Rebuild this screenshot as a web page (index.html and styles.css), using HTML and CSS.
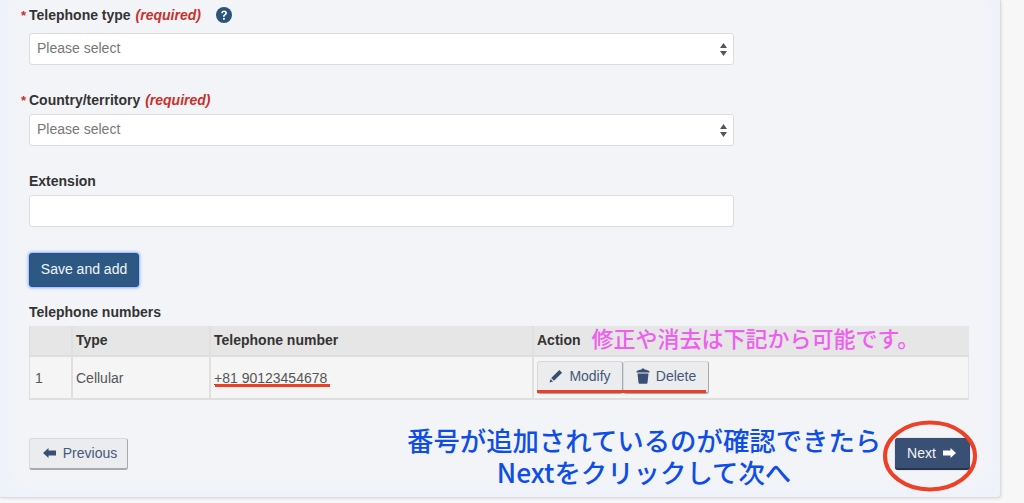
FILE: index.html
```html
<!DOCTYPE html>
<html lang="en">
<head>
<meta charset="utf-8">
<title>Telephone numbers</title>
<link rel="stylesheet" href="styles.css">
</head>
<body>
<main class="card">
  <div class="field field-first">
    <div class="label"><span class="star">*</span>Telephone type <em class="req">(required)</em>
      <svg class="help" viewBox="0 0 16 16" width="16" height="16"><circle cx="8" cy="8" r="8" fill="#2b5277"/><path d="M5.200 6.200C5.300 4.500 6.500 3.600 8.100 3.600c1.700 0 2.900 1 2.900 2.400 0 1.100-.6 1.700-1.400 2.200-.7.400-.9.700-.9 1.300v.3H7v-.5c0-.9.400-1.500 1.100-1.900.7-.4 1-.8 1-1.300 0-.6-.4-1-1.100-1-.7 0-1.100.4-1.200 1.100z" fill="#fff"/><rect x="7" y="10.900" width="1.800" height="1.800" fill="#fff"/></svg>
    </div>
    <div class="control select"><span>Please select</span><svg class="updown" viewBox="0 0 7 13" width="7" height="13"><path d="M3.500 0 7 5H0zM0 8h7l-3.500 5z" fill="#555"/></svg></div>
  </div>
  <div class="field">
    <div class="label label-plain"><span class="star">*</span>Country/territory <em class="req">(required)</em></div>
    <div class="control select"><span>Please select</span><svg class="updown" viewBox="0 0 7 13" width="7" height="13"><path d="M3.500 0 7 5H0zM0 8h7l-3.500 5z" fill="#555"/></svg></div>
  </div>
  <div class="field">
    <div class="label label-plain">Extension</div>
    <div class="control"></div>
  </div>
  <button class="btn-save">Save and add</button>
  <div class="table-title">Telephone numbers</div>
  <div class="table">
    <div class="cell head c1"></div>
    <div class="cell head">Type</div>
    <div class="cell head">Telephone number</div>
    <div class="cell head">Action<span class="note-pink">修正や消去は下記から可能です。</span></div>
    <div class="cell">1</div>
    <div class="cell">Cellular</div>
    <div class="cell"><span class="phone">+81 90123454678</span></div>
    <div class="cell actions">
      <button class="btn btn-action">
        <svg viewBox="0 0 14 14" width="14" height="14"><path d="M10.300.9 13.100 3.700 5 11.800 2.200 9zM1.500 10l2.500 2.500-3.500 1z" fill="#3a4f74"/></svg>Modify</button><button class="btn btn-action">
        <svg viewBox="0 0 14 16" width="14" height="16"><path d="M1.500 5.500h11l-1 9.300q-.1.900-1 .9H3.500q-.9 0-1-.9z" fill="#3a4f74"/><path d="M.5 3.600C1 2.300 3.500 1.500 5.500 1.400L6 .4h2l.5 1c2 .1 4.500.9 5 2.200v.9H.5z" fill="#3a4f74"/></svg>Delete</button>
    </div>
  </div>
  <div class="nav">
    <button class="btn btn-prev">
      <svg viewBox="0 0 13 10" width="13" height="10"><path d="M0 5 5.500 0V2.500H13v5H5.500V10z" fill="#3a4f74"/></svg>Previous</button>
    <div class="note-blue">番号が追加されているのが確認できたら<br>Nextをクリックして次へ</div>
    <button class="btn btn-next">Next
      <svg viewBox="0 0 13 10" width="13" height="10"><path d="M13 5 7.500 0V2.500H0v5h7.500V10z" fill="#fff"/></svg></button>
  </div>
  <div class="mark mark-phone"></div>
  <div class="mark mark-actions"></div>
  <svg class="ring" viewBox="0 0 94 72" width="94" height="72"><ellipse cx="47" cy="36" rx="45" ry="33.500" fill="none" stroke="#ee4026" stroke-width="4"/></svg>
</main>
</body>
</html>
```
FILE: styles.css
```css
* { box-sizing: border-box; }
html, body { margin: 0; height: 503px; overflow: hidden; }
body {
  background: #f7f7f7;
  font-family: "Liberation Sans", Arial, "Noto Sans CJK JP", sans-serif;
  font-size: 14px;
  color: #333;
}
.card {
  position: relative;
  width: 1001px;
  height: 498px;
  padding: 0 32px 0 29px;
  background: #f3f4f7;
  border-right: 1px solid #dcdcde;
  border-bottom: 1px solid #dcdcde;
  border-bottom-right-radius: 4px;
  box-shadow: inset -18px -18px 18px -8px #eef2fa, inset 18px 0 18px -8px #eef2fa, 1px 1px 3px rgba(0,0,0,.08);
}
.field { width: 705px; }
.field-first { padding-top: 7px; }
.field + .field { margin-top: 27px; }
.label {
  display: flex;
  align-items: center;
  height: 16px;
  margin-bottom: 10px;
  font-weight: 700;
  color: #333;
  white-space: pre;
}
.star { position: absolute; left: 21px; color: #c9302c; font-size: 13px; }
.req { color: #c9302c; margin-left: 1px; }
.help { margin-left: 15px; }
.control {
  display: flex;
  align-items: center;
  justify-content: space-between;
  height: 32px;
  padding: 0 6px 2px 7px;
  background: #fff;
  border: 1px solid #dcdcdf;
  border-radius: 3px;
  color: #777;
}
.updown { margin-top: 2px; }
.label-plain { margin-bottom: 6px; }
.btn-save {
  display: block;
  width: 110px;
  height: 34px;
  margin-top: 26px;
  padding: 0 0 2px;
  background: #2d5884;
  border: 1px solid #1c4f9e;
  border-radius: 3px;
  box-shadow: 0 0 3px 1px #8fb0ea;
  color: #f2f5f9;
  font: 14px "Liberation Sans", Arial, sans-serif;
}
.table-title { margin-top: 17px; height: 16px; font-weight: 700; line-height: 16px; }
.table {
  display: grid;
  grid-template-columns: 41px 138px 323px 437px;
  grid-template-rows: 31px 43px;
  width: 940px;
  height: 74px;
  margin-top: 6px;
  background: #f5f5f6;
  border-bottom: 2px solid #dedede;
  border-left: 1px solid #dedede;
  border-right: 1px solid #e4e4e4;
}
.cell {
  display: flex;
  align-items: center;
  padding: 0 0 2px 3px;
  border-left: 2px solid #e0e0e0;
  color: #555;
  white-space: nowrap;
}
.cell:nth-child(4n+1) { border-left: 0; padding-left: 5px; }
.head {
  background: #e6e6e6;
  border-bottom: 2px solid #dedede;
  font-weight: 700;
  color: #333;
}
.note-pink {
  margin: 0 0 6px 11px;
  color: #ee5ff0;
  font: 500 22px "Noto Sans CJK JP", sans-serif;
}
.phone { text-decoration: underline; }
.actions { padding-bottom: 3px; }
.btn {
  display: inline-flex;
  align-items: center;
  justify-content: center;
  padding: 0 0 2px;
  background: #ebecee;
  border: 1px solid #d9d9db;
  border-bottom: 2px solid #a9a9ad;
  border-right: 1px solid #a9a9ad;
  border-radius: 3px;
  color: #45587c;
  font: 14px "Liberation Sans", Arial, sans-serif;
}
.btn-action { width: 86px; height: 33px; gap: 6px; }
.nav {
  display: flex;
  align-items: center;
  justify-content: space-between;
  position: relative;
  width: 941px;
  margin-top: 38px;
  height: 32px;
}
.btn-prev { width: 99px; height: 32px; gap: 7px; padding-left: 3px; }
.btn-next {
  width: 75px;
  height: 32px;
  gap: 7px;
  padding: 0 2px 0 0;
  background: #3a4f74;
  border: 0;
  border-bottom: 2px solid #26344e;
  color: #f4f5f8;
  box-shadow: 0 0 1px #666;
}
.note-blue {
  position: absolute;
  left: 378px;
  top: -14px;
  width: 474px;
  text-align: center;
  color: #0f4ee6;
  font: 500 26.400px/32px "Noto Sans CJK JP", sans-serif;
  white-space: nowrap;
}
.mark { position: absolute; height: 3px; background: #ee4026; }
.mark-phone { left: 215px; top: 384px; width: 115px; }
.mark-actions { left: 537px; top: 390px; width: 169px; }
.ring { position: absolute; left: 883px; top: 420px; }
```
